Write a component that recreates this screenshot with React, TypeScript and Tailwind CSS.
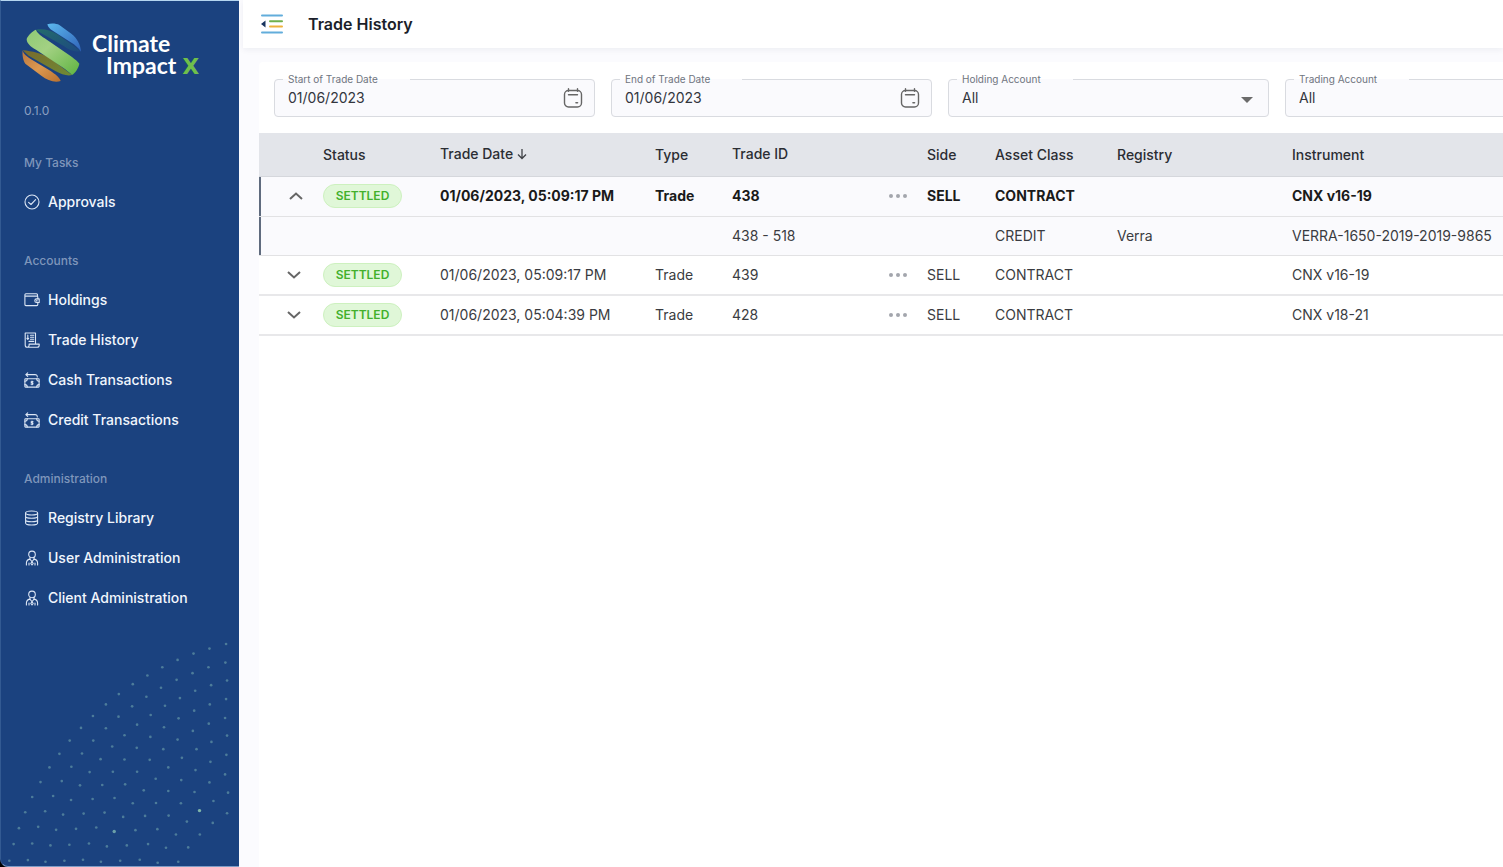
import { useState } from "react";
import type { ReactNode } from "react";

type Trade = {
  id: string;
  date: string;
  side: string;
  assetClass: string;
  instrument: string;
  children?: { id: string; assetClass: string; registry: string; instrument: string }[];
};

const TRADES: Trade[] = [
  {
    id: "438",
    date: "01/06/2023, 05:09:17 PM",
    side: "SELL",
    assetClass: "CONTRACT",
    instrument: "CNX v16-19",
    children: [
      {
        id: "438 - 518",
        assetClass: "CREDIT",
        registry: "Verra",
        instrument: "VERRA-1650-2019-2019-9865",
      },
    ],
  },
  {
    id: "439",
    date: "01/06/2023, 05:09:17 PM",
    side: "SELL",
    assetClass: "CONTRACT",
    instrument: "CNX v16-19",
  },
  {
    id: "428",
    date: "01/06/2023, 05:04:39 PM",
    side: "SELL",
    assetClass: "CONTRACT",
    instrument: "CNX v18-21",
  },
];

// sidebar backdrop, drawn in a 717 x 691 box
const DOTS: [number, number][] = [
  [678, 21], [628, 35], [580, 50], [532, 69], [486, 91], [441, 116], [397, 142], [355, 172],
  [316, 203], [277, 238], [241, 274], [207, 312], [176, 352], [146, 393], [119, 437], [94, 482],
  [73, 528], [54, 576], [38, 624], [25, 674], [676, 77], [625, 91], [577, 109], [529, 129],
  [482, 153], [438, 180], [395, 209], [354, 240], [316, 275], [278, 312], [244, 351], [212, 391],
  [183, 434], [157, 479], [133, 525], [112, 572], [94, 622], [81, 672], [681, 131], [633, 145],
  [585, 162], [539, 184], [494, 207], [451, 235], [410, 264], [372, 296], [335, 330], [300, 368],
  [267, 407], [238, 447], [211, 491], [187, 535], [166, 581], [149, 628], [134, 677], [678, 187],
  [629, 203], [582, 222], [535, 245], [491, 272], [450, 301], [409, 334], [372, 369], [337, 406],
  [305, 446], [276, 488], [249, 532], [226, 578], [206, 626], [191, 674], [675, 244], [626, 261],
  [578, 283], [532, 309], [489, 338], [448, 370], [410, 406], [374, 444], [342, 485], [312, 529],
  [287, 574], [265, 622], [247, 671], [681, 297], [634, 316], [589, 338], [545, 364], [504, 393],
  [466, 427], [430, 462], [397, 501], [368, 542], [341, 586], [319, 631], [301, 677], [679, 355],
  [631, 376], [586, 401], [543, 431], [504, 464], [467, 500], [434, 539], [405, 582], [379, 628],
  [359, 674], [675, 414], [628, 438], [583, 467], [542, 501], [505, 538], [471, 579], [443, 624],
  [418, 671], [684, 469], [640, 494], [598, 523], [560, 556], [527, 595], [497, 635], [472, 680],
  [681, 531], [638, 560], [599, 595], [564, 634], [534, 677],
];

function NavIcon({ children }: { children: ReactNode }) {
  return (
    <svg
      viewBox="0 0 16 16"
      className="h-4 w-4 shrink-0"
      fill="none"
      stroke="#dce6f5"
      strokeWidth="1.1"
      strokeLinecap="round"
      strokeLinejoin="round"
      aria-hidden="true"
    >
      {children}
    </svg>
  );
}

const ApprovalsIcon = () => (
  <NavIcon>
    <circle cx="8" cy="8" r="7" />
    <path d="M4.6 8.3 7 10.5l4.6-4.8" />
  </NavIcon>
);

const HoldingsIcon = () => (
  <NavIcon>
    <path d="M13.8 6.8V4.9a.8.8 0 0 0-.8-.8H.9M13.8 10.4v2.2a1 1 0 0 1-1 1H1.9a1 1 0 0 1-1-1V2.8c0-.6.4-1 1-1h10.6c.6 0 1 .4 1 1v1.3" />
    <path d="M15.2 6.9h-2.6a1.8 1.8 0 0 0 0 3.6h2.6z" />
    <circle cx="12.7" cy="8.7" r=".3" />
  </NavIcon>
);

const HistoryIcon = () => (
  <NavIcon>
    <path d="M3.2 15.2a2 2 0 0 1-2-2V1h10.3v10.8M3.2 15.2a1.8 1.8 0 0 0 1.9-1.9v-1.2h10.1v1.1a2 2 0 0 1-2 2z" />
    <path d="M3.8 3v4.2M2.9 6.3l.9 1 .9-1M6.5 3.2H9.7M6.5 5.2H9.7M6.5 7.2H9.7M5 9.4h4.7" />
  </NavIcon>
);

const CashIcon = () => (
  <NavIcon>
    <rect x=".9" y="6.7" width="14.2" height="8.4" rx=".6" />
    <path d="M.9 9.2c1.4 0 2.4-1 2.4-2.4M15.1 9.2c-1.4 0-2.4-1-2.4-2.4M.9 12.6c1.4 0 2.4 1 2.4 2.4M15.1 12.6c-1.4 0-2.4 1-2.4 2.4" />
    <path d="M9 9.7c-.9-.5-2-.3-2 .4 0 1 2 .6 2 1.6 0 .8-1.2.9-2 .4M8 9v3.8" />
    <path d="M13.3 4.9c0-1.4-.9-2.3-2.3-2.3H2M3.7.9 1.8 2.6l1.9 1.7" />
  </NavIcon>
);

const LibraryIcon = () => (
  <NavIcon>
    <ellipse cx="7.6" cy="3" rx="6" ry="2" />
    <path d="M1.6 3v10c0 1.1 2.7 2 6 2s6-.9 6-2V3M1.6 6.3c0 1.1 2.7 2 6 2s6-.9 6-2M1.6 9.7c0 1.1 2.7 2 6 2s6-.9 6-2" />
  </NavIcon>
);

const UserIcon = () => (
  <NavIcon>
    <circle cx="8" cy="4.4" r="3.3" />
    <path d="M2.4 15v-1.800c0-2.200 1.300-3.700 3.400-4.100L8 11.500l2.200-2.400c2.100.4 3.400 1.900 3.400 4.100V15" />
    <path d="M6 7.200v2M10 7.200v2M8 11.500l-1.200 2L8 15l1.200-1.500zM5 13v2M11 13v2" />
  </NavIcon>
);

const SECTIONS = [
  { title: "My Tasks", items: [{ label: "Approvals", Icon: ApprovalsIcon }] },
  {
    title: "Accounts",
    items: [
      { label: "Holdings", Icon: HoldingsIcon },
      { label: "Trade History", Icon: HistoryIcon },
      { label: "Cash Transactions", Icon: CashIcon },
      { label: "Credit Transactions", Icon: CashIcon },
    ],
  },
  {
    title: "Administration",
    items: [
      { label: "Registry Library", Icon: LibraryIcon },
      { label: "User Administration", Icon: UserIcon },
      { label: "Client Administration", Icon: UserIcon },
    ],
  },
];

function LogoMark() {
  return (
    <svg viewBox="0 0 180 180" className="h-[60px] w-[60px]" aria-hidden="true">
      <defs>
        <linearGradient id="blue" x1="0" y1="0" x2="1" y2="1">
          <stop offset="0" stopColor="#5cb8ee" />
          <stop offset="1" stopColor="#2f62b8" />
        </linearGradient>
        <linearGradient id="green" x1="0" y1="0" x2="1" y2="1">
          <stop offset="0" stopColor="#8fc975" />
          <stop offset=".4" stopColor="#a3d183" />
          <stop offset="1" stopColor="#5fb441" />
        </linearGradient>
        <linearGradient id="orange" x1="0" y1="0" x2="1" y2="1">
          <stop offset="0" stopColor="#b9763f" />
          <stop offset=".5" stopColor="#dc9850" />
          <stop offset="1" stopColor="#b9712f" />
        </linearGradient>
        <linearGradient id="teal" x1="0" y1="0" x2="1" y2="1">
          <stop offset="0" stopColor="#236b6c" />
          <stop offset="1" stopColor="#1d4a80" />
        </linearGradient>
        <linearGradient id="olive" x1="0" y1="0" x2="1" y2="1">
          <stop offset="0" stopColor="#7a6a2c" />
          <stop offset="1" stopColor="#6f8a34" />
        </linearGradient>
      </defs>
      <path d="M42 20C62 16 84 20 106 34L176 84C160 88 142 82 124 68L50 26Z" fill="url(#teal)" />
      <path d="M76 4C88 0 104 2 112 6L148 32C166 46 176 66 177 86C170 76 160 66 146 58L90 22C84 18 78 12 76 4Z" fill="url(#blue)" />
      <path d="M2 82C30 84 60 92 84 106L150 156C136 160 118 154 100 144L20 98Z" fill="url(#olive)" />
      <path d="M42 20C32 24 18 36 14 48C14 60 24 70 42 80L120 132C134 142 144 150 150 156C160 150 170 134 172 122C168 116 160 110 150 102L68 46C54 36 44 28 42 20Z" fill="url(#green)" />
      <path d="M2 82C0 96 4 114 10 122L58 158C76 172 98 180 116 174C112 162 100 154 86 144L26 108C10 98 4 92 2 82Z" fill="url(#orange)" />
    </svg>
  );
}

function Sidebar() {
  return (
    <aside className="w-[239px] shrink-0 bg-black">
      <div className="flex min-h-screen flex-col rounded-bl-lg border-y border-l border-t-[#b5d6f0] border-b-[#7d9cc6] border-l-[#335a92] bg-[#1b427f]">
        <a href="#" className="flex items-center gap-[10px] pt-[22px] pl-[21px] text-white">
          <LogoMark />
          <span className="flex flex-col pt-1 font-['Lato',sans-serif] text-[23px] leading-[22px] font-bold">
            <span>Climate</span>
            <span className="flex items-baseline gap-[6px] pl-[14px]">
              Impact
              <span className="font-['DejaVu_Sans',sans-serif] text-[22px] leading-[22px] text-[#6fbf4b]">X</span>
            </span>
          </span>
        </a>
        <p className="mt-[18px] pl-[23px] text-xs leading-5 text-[#8ba0c2]">0.1.0</p>

        <nav className="mt-[21px] flex flex-col gap-[18px] pl-[23px]">
          {SECTIONS.map((section) => (
            <div key={section.title}>
              <h2 className="flex h-10 items-center pt-[2px] text-xs font-medium text-[#7f96bb]">{section.title}</h2>
              <ul>
                {section.items.map(({ label, Icon }) => (
                  <li key={label}>
                    <a href="#" className="flex h-10 items-center gap-2 text-sm font-medium text-[#f1f6fd]">
                      <Icon />
                      {label}
                    </a>
                  </li>
                ))}
              </ul>
            </div>
          ))}
        </nav>

        <svg viewBox="0 0 717 691" className="mt-auto w-full" fill="#4d7c9a" aria-hidden="true">
          {DOTS.map(([x, y]) => (
            <circle key={`${x}-${y}`} cx={x} cy={y} r="4" />
          ))}
          <circle cx="598" cy="523" r="5" fill="#7fb5a8" />
          <circle cx="341" cy="586" r="5" fill="#6b9fa8" />
        </svg>
      </div>
    </aside>
  );
}

function MenuIcon() {
  return (
    <svg viewBox="0 0 24 20" className="h-5 w-6" fill="none" strokeWidth="2" strokeLinecap="round" aria-hidden="true">
      <path d="M2 1.5h20M2 18.5h20" stroke="#62addb" />
      <path d="M10 7.2h12" stroke="#6fb04c" />
      <path d="M10 12.6h12" stroke="#eeb23c" />
      <path d="M5.5 6.5v7L1 10z" fill="#17345f" />
    </svg>
  );
}

function CalendarIcon() {
  return (
    <svg viewBox="0 0 20 20" className="h-5 w-5" fill="none" stroke="#666" strokeLinecap="round" aria-hidden="true">
      <rect x="1.5" y="2.5" width="17" height="16.5" rx="4" strokeWidth="1.4" />
      <path d="M5.5 .8v2.4M14.5 .8v2.4M5.5 6.8h9" strokeWidth="1.4" />
      <path d="M13 14.8h1.5" strokeWidth="1.6" />
    </svg>
  );
}

function Field({ id, label, children }: { id: string; label: string; children: ReactNode }) {
  return (
    <fieldset className="w-[321px] shrink-0 rounded border border-[#d9dbe0] bg-[#fafafd]">
      <legend className="ml-2 pr-8 pl-[5px] text-[10px] leading-3 text-[#6f7580]">
        <label htmlFor={id}>{label}</label>
      </legend>
      <div className="flex h-[31px] items-start pr-[11px] pl-[13px]">{children}</div>
    </fieldset>
  );
}

function DateField({ id, label }: { id: string; label: string }) {
  const [value, setValue] = useState("01/06/2023");
  return (
    <Field id={id} label={label}>
      <input
        id={id}
        value={value}
        onChange={(e) => setValue(e.target.value)}
        className="h-6 min-w-0 flex-1 bg-transparent text-sm text-[#33363d] outline-none"
      />
      <button type="button" aria-label={`Pick ${label}`} className="pt-[3px]">
        <CalendarIcon />
      </button>
    </Field>
  );
}

function SelectField({ id, label }: { id: string; label: string }) {
  return (
    <Field id={id} label={label}>
      <div className="relative flex-1">
        <select id={id} className="h-6 w-full appearance-none bg-transparent text-sm text-[#33363d] outline-none">
          <option>All</option>
        </select>
        <svg viewBox="0 0 12 6" className="pointer-events-none absolute top-3 right-1 h-[6px] w-3" fill="#6b6b6b" aria-hidden="true">
          <path d="M0 0h12L6 6z" />
        </svg>
      </div>
    </Field>
  );
}

function Chevron({ up }: { up: boolean }) {
  return (
    <svg viewBox="0 0 14 8" className="h-2 w-[14px]" fill="none" stroke="#666" strokeWidth="2" aria-hidden="true">
      <path d={up ? "M1 7l6-5.5L13 7" : "M1 1l6 5.5L13 1"} />
    </svg>
  );
}

function TradeRows({ trade }: { trade: Trade }) {
  const [open, setOpen] = useState(Boolean(trade.children));
  return (
    <>
      <tr className={open ? "h-10 border-b border-[#e2e2e4] bg-[#fafafd] font-bold text-[#1a1a1a]" : "h-10 border-b-2 border-[#e8e8ea]"}>
        <td className={open ? "pl-[30px] shadow-[inset_2px_0_#5f6b7e]" : "pl-7"}>
          <button type="button" aria-label="Toggle details" className="block" onClick={() => setOpen(!open)}>
            <Chevron up={open} />
          </button>
        </td>
        <td>
          <span className="inline-flex h-6 w-[79px] items-center justify-center rounded-full border border-[#cdf1bf] bg-[#e0f7d8] text-xs font-semibold text-[#43b02c]">
            SETTLED
          </span>
        </td>
        <td>{trade.date}</td>
        <td>Trade</td>
        <td>{trade.id}</td>
        <td>
          <button type="button" aria-label="More" className="block">
            <svg viewBox="0 0 18 4" className="h-1 w-[18px]" fill="#a3a6ad" aria-hidden="true">
              <circle cx="2" cy="2" r="2" />
              <circle cx="9" cy="2" r="2" />
              <circle cx="16" cy="2" r="2" />
            </svg>
          </button>
        </td>
        <td>{trade.side}</td>
        <td>{trade.assetClass}</td>
        <td />
        <td>{trade.instrument}</td>
      </tr>
      {open &&
        trade.children?.map((child) => (
          <tr key={child.id} className="h-[39px] border-b border-[#e2e2e4] bg-[#fafafd]">
            <td className="shadow-[inset_2px_0_#5f6b7e]" />
            <td colSpan={3} />
            <td>{child.id}</td>
            <td colSpan={2} />
            <td>{child.assetClass}</td>
            <td>{child.registry}</td>
            <td>{child.instrument}</td>
          </tr>
        ))}
    </>
  );
}

function TradeTable() {
  return (
    <table className="w-full table-fixed border-collapse text-left text-sm whitespace-nowrap text-[#3a3c41]">
      <colgroup>
        <col className="w-16" />
        <col className="w-[117px]" />
        <col className="w-[215px]" />
        <col className="w-[77px]" />
        <col className="w-[157px]" />
        <col className="w-[38px]" />
        <col className="w-[68px]" />
        <col className="w-[122px]" />
        <col className="w-[175px]" />
        <col />
      </colgroup>
      <thead>
        <tr className="h-[43px] border-b border-[#d5d7dc] bg-[#e3e5ea] text-[#2b2d33]">
          <td />
          <th className="pt-[2px] font-medium">Status</th>
          <th className="font-medium">
            <button type="button" className="flex items-center gap-1">
              Trade Date
              <svg viewBox="0 0 10 12" className="h-3 w-[10px]" fill="none" stroke="#3f4146" strokeWidth="1.3" aria-hidden="true">
                <path d="M5 1v9.5M1 6.5l4 4 4-4" />
              </svg>
            </button>
          </th>
          <th className="pt-[2px] font-medium">Type</th>
          <th className="font-medium">Trade ID</th>
          <td />
          <th className="pt-[2px] font-medium">Side</th>
          <th className="pt-[2px] font-medium">Asset Class</th>
          <th className="pt-[2px] font-medium">Registry</th>
          <th className="pt-[2px] font-medium">Instrument</th>
        </tr>
      </thead>
      <tbody>
        {TRADES.map((trade) => (
          <TradeRows key={trade.id} trade={trade} />
        ))}
      </tbody>
    </table>
  );
}

export default function App() {
  return (
    <div className="flex min-h-screen bg-[#fbfbfe] font-['Inter',sans-serif]">
      <Sidebar />
      <div className="flex min-w-0 flex-1 flex-col overflow-hidden pl-1">
        <header className="flex h-12 items-center gap-6 bg-white pl-[17px] shadow-[0_2px_6px_rgba(20,30,60,0.06)]">
          <button type="button" aria-label="Collapse menu">
            <MenuIcon />
          </button>
          <h1 className="text-base font-semibold text-[#1b1f2a]">Trade History</h1>
        </header>
        <main className="mt-[14px] ml-4 flex-1 rounded-tl bg-white">
          <form className="flex gap-4 overflow-hidden px-[15px] pt-[11px] pb-4">
            <DateField id="start-date" label="Start of Trade Date" />
            <DateField id="end-date" label="End of Trade Date" />
            <SelectField id="holding-account" label="Holding Account" />
            <SelectField id="trading-account" label="Trading Account" />
          </form>
          <TradeTable />
        </main>
      </div>
    </div>
  );
}
